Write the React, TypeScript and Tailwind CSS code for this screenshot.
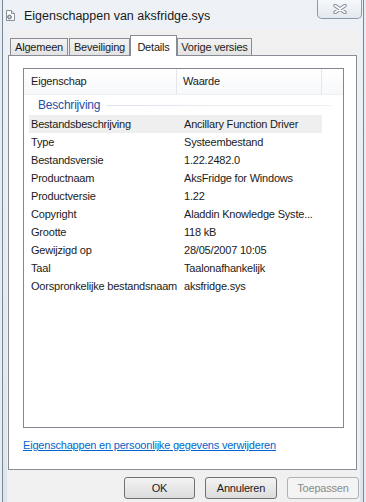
import React from "react";

const rows: [string, string][] = [
  ["Bestandsbeschrijving", "Ancillary Function Driver"],
  ["Type", "Systeembestand"],
  ["Bestandsversie", "1.22.2482.0"],
  ["Productnaam", "AksFridge for Windows"],
  ["Productversie", "1.22"],
  ["Copyright", "Aladdin Knowledge Syste..."],
  ["Grootte", "118 kB"],
  ["Gewijzigd op", "28/05/2007 10:05"],
  ["Taal", "Taalonafhankelijk"],
  ["Oorspronkelijke bestandsnaam", "aksfridge.sys"],
];

function FileIcon() {
  return (
    <svg width="11" height="11" viewBox="0 0 11 11">
      <path d="M1.5 0.5h5l3 3v7h-8z" fill="#fff" stroke="#8a8f96" />
      <path d="M6.5 0.5v3h3" fill="#e6e9ed" stroke="#8a8f96" />
      <circle cx="4.5" cy="7" r="2" fill="#9aa3ad" stroke="#6b737c" strokeWidth="0.8" />
      <circle cx="4.5" cy="7" r="0.7" fill="#fff" />
    </svg>
  );
}

function CloseButton() {
  return (
    <div className="w-[45px] h-[19px] flex items-center justify-center rounded-b-[5px] border border-t-0 border-[#8d99a8] bg-gradient-to-b from-[#f6f8fb] to-[#e3e9f0]">
      <svg width="14" height="10" viewBox="0 0 14 10">
        <path d="M2 1.5l10 7M12 1.5l-10 7" stroke="#7d8794" strokeWidth="3.4" strokeLinecap="round" />
        <path d="M2 1.5l10 7M12 1.5l-10 7" stroke="#ffffff" strokeWidth="1.6" strokeLinecap="round" />
      </svg>
    </div>
  );
}

function Tab({ label, width, active }: { label: string; width: string; active?: boolean }) {
  if (active) {
    return (
      <div
        className={`${width} h-[21px] -mb-px relative z-10 bg-white border border-b-0 border-[#898c95] flex items-start justify-center pt-[3px]`}
      >
        {label}
      </div>
    );
  }
  return (
    <div
      className={`${width} h-[17px] bg-gradient-to-b from-[#f3f3f3] to-[#e3e3e3] border border-b-0 border-[#898c95] flex items-center justify-center`}
    >
      {label}
    </div>
  );
}

export default function App() {
  return (
    <div className="w-[366px] h-[502px] overflow-hidden bg-[#e6ecf3] font-['Liberation_Sans',Arial,sans-serif] text-[11px] tracking-[-0.2px] text-[#1b1b1b]">
      <div className="ml-[2px] mr-[2px] h-full border-l border-r border-[#7b8694] bg-gradient-to-b from-[#eef2f7] to-[#dde5ee] flex flex-col">
        {/* Title bar */}
        <div className="h-[30px] flex items-start shrink-0">
          <div className="pl-[2px] pt-[10px]">
            <FileIcon />
          </div>
          <div className="pl-[8px] pt-[7px] text-[12.5px] tracking-normal text-[#1a1a1a]">Eigenschappen van aksfridge.sys</div>
          <div className="ml-auto mr-[1px]">
            <CloseButton />
          </div>
        </div>

        {/* Client area */}
        <div className="ml-[4px] mr-[3px] flex-1 bg-[#f0f0f0] pt-[5px] flex flex-col">
          <div className="ml-[1px] mr-[3px] flex flex-col">
            {/* Tabs */}
            <div className="h-[20px] flex items-end pl-[2px]">
              <Tab label="Algemeen" width="w-[58px]" />
              <div className="w-[1px]" />
              <Tab label="Beveiliging" width="w-[61px]" />
              <Tab label="Details" width="w-[47px]" active />
              <Tab label="Vorige versies" width="w-[75px]" />
            </div>

            {/* Tab page */}
            <div className="h-[415px] bg-white border border-[#898c95] pl-[14px] pr-[12px] pt-[12px] flex flex-col">
              <div className="h-[360px] border border-[#828790] bg-white flex flex-col">
                {/* Header */}
                <div className="h-[26px] flex items-stretch bg-gradient-to-b from-white to-[#f7f8fa] border-b border-[#eef0f3]">
                  <div className="w-[153px] pl-[7px] flex items-center border-r border-[#e3e6ea]">Eigenschap</div>
                  <div className="w-[145px] pl-[6px] flex items-center border-r border-[#e3e6ea]">Waarde</div>
                  <div className="flex-1" />
                </div>

                {/* Group header */}
                <div className="h-[20px] flex items-center pl-[14px] pr-[11px]">
                  <span className="text-[12px] text-[#2350a8]">Beschrijving</span>
                  <div className="flex-1 ml-[6px] h-px bg-gradient-to-r from-[#dfe5ee] to-[#eef1f5]" />
                </div>

                {/* Rows */}
                <div className="pl-[5px] flex flex-col">
                  {rows.map(([name, value], i) => (
                    <div
                      key={name}
                      className={`h-[18px] w-[293px] flex items-center ${i === 0 ? "bg-[#efefef]" : ""}`}
                    >
                      <div className="w-[155px] shrink-0 pl-[2px] whitespace-nowrap">{name}</div>
                      <div className="whitespace-nowrap">{value}</div>
                    </div>
                  ))}
                </div>
              </div>

              <div className="mt-[10px] text-[#0066cc] underline leading-[14px]">
                Eigenschappen en persoonlijke gegevens verwijderen
              </div>
            </div>
          </div>

          {/* Buttons */}
          <div className="mt-[7px] flex justify-end gap-[10px] pr-[1px]">
            <button className="w-[71px] h-[22px] rounded-[3px] border border-[#707070] bg-gradient-to-b from-[#f3f3f3] to-[#dcdcdc] text-[#1b1b1b]">
              OK
            </button>
            <button className="w-[72px] h-[22px] rounded-[3px] border border-[#707070] bg-gradient-to-b from-[#f3f3f3] to-[#dcdcdc] text-[#1b1b1b]">
              Annuleren
            </button>
            <button className="w-[72px] h-[22px] rounded-[3px] border border-[#adb2b5] bg-[#f4f4f4] text-[#8a8a8a]">
              Toepassen
            </button>
          </div>
        </div>
      </div>
    </div>
  );
}
